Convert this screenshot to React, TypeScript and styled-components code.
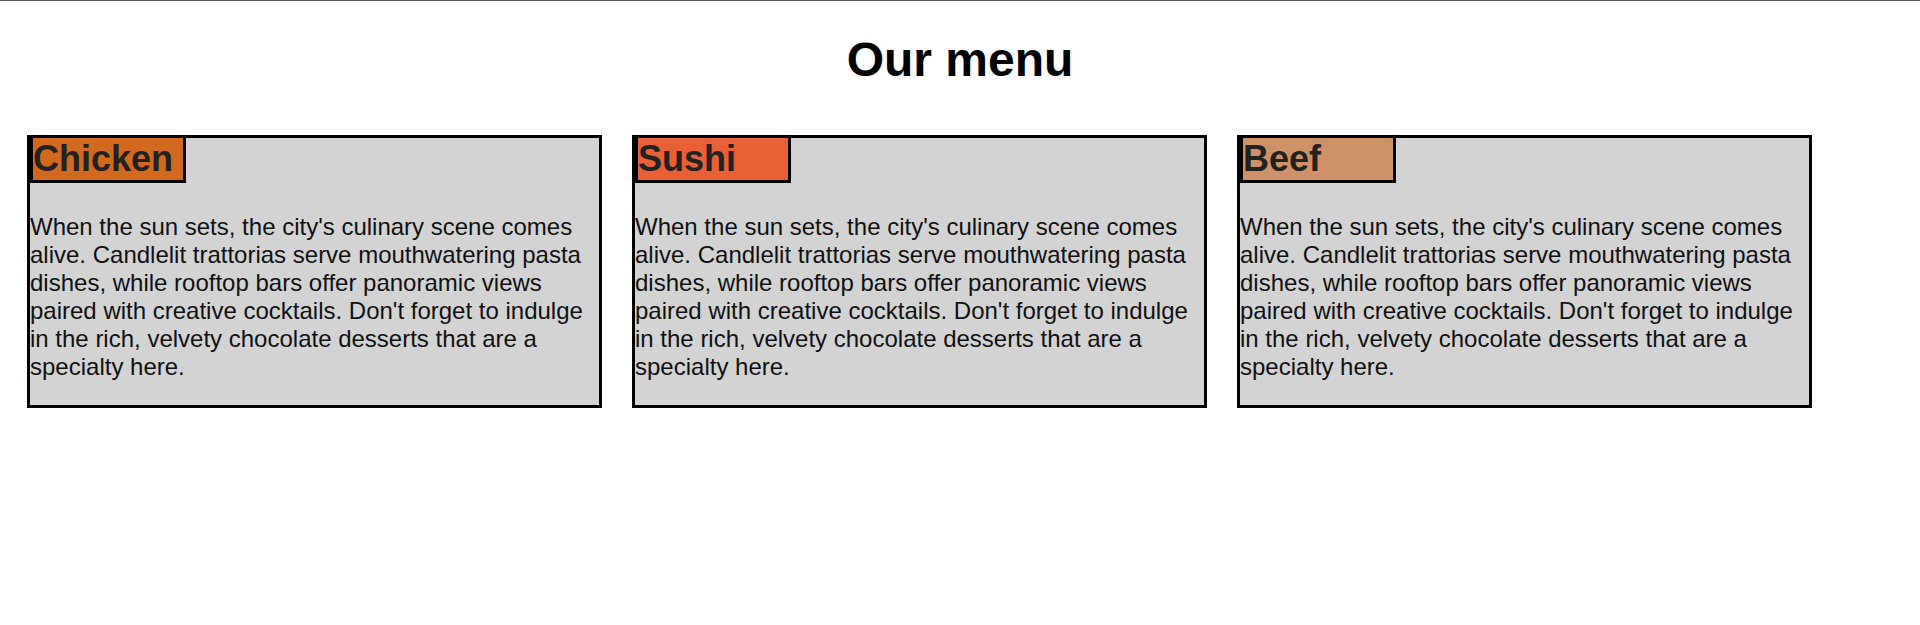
import styled, { createGlobalStyle } from 'styled-components';

const GlobalStyle = createGlobalStyle`
  html {
    border-top: 1px solid #5e5e5e;
  }
  body {
    margin: 0;
    background: #fff;
    font-family: "Liberation Sans", Arial, sans-serif;
    font-size: 24px;
    color: #111;
  }
`;

const Page = styled.div`
  padding: 0 8px;
`;

const Title = styled.h1`
  margin: 31px 0 0;
  font-size: 48px;
  font-weight: 700;
  line-height: normal;
  color: #000;
  text-align: center;
`;

const MenuList = styled.section`
  display: flex;
  align-items: flex-start;
  gap: 30px;
  margin-top: 48px;
  padding-left: 19px;
`;

const Card = styled.article`
  box-sizing: border-box;
  width: 575px;
  border: 3px solid #000;
  background-color: lightgray;
`;

const Dish = styled.h2<{ $color: string }>`
  width: 150px;
  margin: 0;
  font-size: 36px;
  font-weight: 700;
  line-height: normal;
  color: #222;
  background-color: ${(props) => props.$color};
  border: 3px solid #000;
  border-top: none;
`;

const Text = styled.p`
  margin: 30px 0 24px;
  line-height: normal;
`;

interface IDish {
  name: string;
  color: string;
}

const dishes: IDish[] = [
  { name: 'Chicken', color: '#d2691e' },
  { name: 'Sushi', color: '#e86035' },
  { name: 'Beef', color: '#cf9268' },
];

const blurb =
  "When the sun sets, the city's culinary scene comes alive. Candlelit trattorias serve mouthwatering pasta dishes, while rooftop bars offer panoramic views paired with creative cocktails. Don't forget to indulge in the rich, velvety chocolate desserts that are a specialty here.";

function App() {
  return (
    <>
      <GlobalStyle />
      <Page>
        <Title>Our menu</Title>
        <MenuList>
          {dishes.map((dish) => (
            <Card key={dish.name}>
              <Dish $color={dish.color}>{dish.name}</Dish>
              <Text>{blurb}</Text>
            </Card>
          ))}
        </MenuList>
      </Page>
    </>
  );
}

export default App;
